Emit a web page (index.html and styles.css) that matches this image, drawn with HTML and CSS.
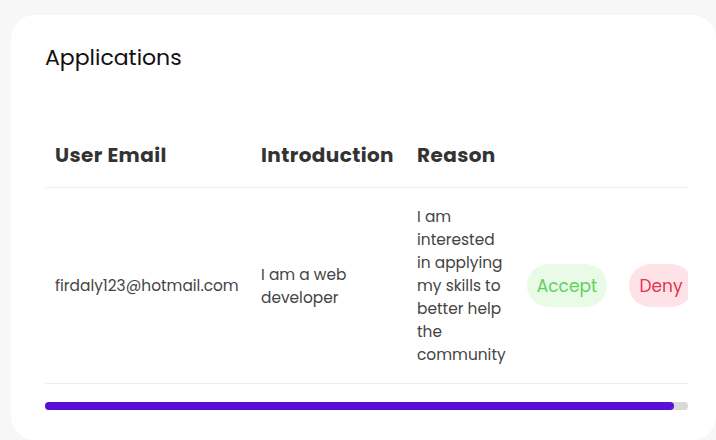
FILE: index.html
```html
<!DOCTYPE html>
<html lang="en">
<head>
<meta charset="utf-8">
<title>Applications</title>
<link rel="stylesheet" href="styles.css">
</head>
<body>
<main class="card">
  <h2 class="title">Applications</h2>
  <div class="table-wrap">
    <table class="apps">
      <colgroup>
        <col class="c-email">
        <col class="c-intro">
        <col class="c-reason">
        <col class="c-accept">
        <col class="c-deny">
      </colgroup>
      <thead>
        <tr>
          <th>User Email</th>
          <th>Introduction</th>
          <th>Reason</th>
          <th></th>
          <th></th>
        </tr>
      </thead>
      <tbody>
        <tr>
          <td>firdaly123@hotmail.com</td>
          <td>I am a web developer</td>
          <td>I am interested in applying my skills to better help the community</td>
          <td><button class="btn btn-accept">Accept</button></td>
          <td><button class="btn btn-deny">Deny</button></td>
        </tr>
      </tbody>
    </table>
  </div>
  <div class="scrollbar"><div class="scroll-thumb" style="width: 97.8%"></div></div>
</main>
</body>
</html>
```
FILE: styles.css
```css
html, body {
  margin: 0;
  padding: 0;
}
body {
  background: #f7f7f7;
  font-family: "Poppins", "Inter", "Noto Sans", sans-serif;
  overflow: hidden;
}
.card {
  box-sizing: border-box;
  margin: 15px 0 0 11px;
  width: 705px;
  height: 425px;
  background: #ffffff;
  border-radius: 24px;
  padding: 28px 28px 0 34px;
  overflow: hidden;
}
.title {
  margin: 0;
  font-size: 22px;
  line-height: 30px;
  font-weight: 400;
  color: #111111;
}
.table-wrap {
  margin-top: 44px;
  width: 643px;
  overflow: hidden;
}
.apps {
  table-layout: fixed;
  width: 657px;
  border-collapse: collapse;
}
.c-email { width: 206px; }
.c-intro { width: 156px; }
.c-reason { width: 110px; }
.c-accept { width: 102px; }
.c-deny { width: 83px; }
.apps th {
  text-align: left;
  font-size: 20px;
  letter-spacing: 0.4px;
  font-weight: 700;
  color: #333333;
  line-height: 30px;
  padding: 23px 10px 17px;
  border-bottom: 1px solid #eeeeee;
  white-space: nowrap;
}
.apps td {
  font-size: 15.4px;
  line-height: 23px;
  color: #444444;
  padding: 17px 10px;
  vertical-align: middle;
  border-bottom: 1px solid #eeeeee;
}
.btn {
  font-family: inherit;
  font-size: 17px;
  border: none;
  border-radius: 22px;
  height: 43px;
  padding: 0 9px;
  cursor: pointer;
}
.btn-accept {
  width: 80px;
  background: #e9fbe7;
  color: #5fd05c;
}
.btn-deny {
  width: 64px;
  background: #fde3e7;
  color: #e6334f;
}
.scrollbar {
  margin-top: 18px;
  width: 643px;
  height: 8px;
  border-radius: 4px;
  background: #d9d9d9;
}
.scroll-thumb {
  height: 100%;
  border-radius: 4px;
  background: #5a0fd8;
}
```
